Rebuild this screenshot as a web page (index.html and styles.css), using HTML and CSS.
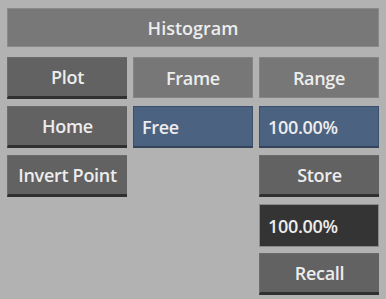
FILE: index.html
```html
<html>
<head>
  <title>Histogram</title>
  <link rel="stylesheet" href="styles.css">
</head>
<body>
  <div class="panel">
    <div class="title span3">Histogram</div>

    <div class="btn">Plot</div>
    <div class="label">Frame</div>
    <div class="label">Range</div>

    <div class="btn">Home</div>
    <div class="field blue">Free</div>
    <div class="field blue">100.00%</div>

    <div class="btn">Invert Point</div>
    <div class="empty"></div>
    <div class="btn">Store</div>

    <div class="empty"></div>
    <div class="empty"></div>
    <div class="field dark">100.00%</div>

    <div class="empty"></div>
    <div class="empty"></div>
    <div class="btn">Recall</div>
  </div>
</body>
</html>
```

FILE: styles.css
```css
html, body {
  margin: 0;
  background: #b2b2b2;
}

.panel {
  display: grid;
  grid-template-columns: 120px 120px 120px;
  grid-auto-rows: 42px;
  column-gap: 6px;
  row-gap: 7px;
  padding: 8px 0 0 7px;
  font-family: "Open Sans", "Noto Sans", sans-serif;
  font-size: 18px;
  font-weight: 600;
  color: #ededed;
}

.span3 {
  grid-column: span 3;
}

.title {
  height: 39px;
  margin-bottom: 1px;
  background: #787878;
  border: 1px solid #8a8a8a;
  box-sizing: border-box;
  display: flex;
  align-items: center;
  justify-content: center;
}

.btn, .label, .field {
  box-sizing: border-box;
  display: flex;
  align-items: center;
  letter-spacing: -0.3px;
}

.btn {
  justify-content: center;
  background: #626262;
  border-left: 1px solid #6e6e6e;
  border-top: 1px solid #6a6a6a;
  border-bottom: 3px solid #303030;
}

.label {
  justify-content: center;
  background: #777777;
  height: 41px;
  border: 1px solid #858585;
}

.field {
  padding-left: 8px;
  height: 42px;
}

.blue {
  background: #4b6381;
  border: 1px solid #3c4f6a;
  border-bottom: 2px solid #33435a;
}

.dark {
  background: #343434;
  border: 1px solid #8a8a8a;
  height: 43px;
}
```
